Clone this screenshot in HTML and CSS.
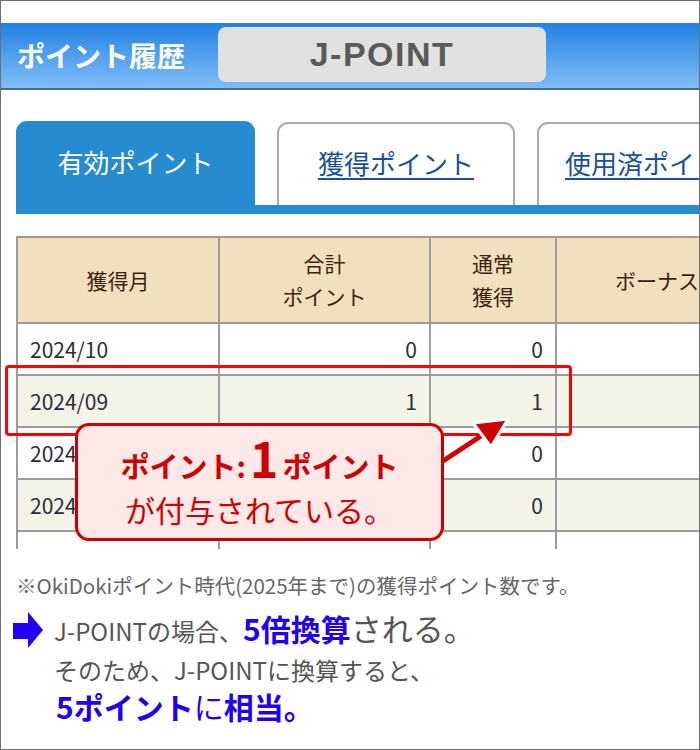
FILE: index.html
```html
<!DOCTYPE html>
<html lang="ja">
<head>
    <meta charset="UTF-8">
    <meta name="viewport" content="width=device-width, initial-scale=1.0">
    <title>ポイント履歴</title>
    <link rel="stylesheet" href="styles.css">
</head>
<body>
    <div class="frame">
        <header class="topbar">
            <h1 class="title">ポイント履歴</h1>
            <div class="brand-btn">J-POINT</div>
        </header>

        <nav class="tabs">
            <div class="tab active">有効ポイント</div>
            <div class="tab"><a href="#">獲得ポイント</a></div>
            <div class="tab"><a href="#">使用済ポイント</a></div>
        </nav>
        <div class="tab-bar"></div>

        <div class="table-wrap">
            <table class="history">
                <thead>
                    <tr>
                        <th class="col-month">獲得月</th>
                        <th class="col-total">合計<br>ポイント</th>
                        <th class="col-normal">通常<br>獲得</th>
                        <th class="col-bonus">ボーナス獲得</th>
                    </tr>
                </thead>
                <tbody>
                    <tr><td>2024/10</td><td class="num">0</td><td class="num">0</td><td></td></tr>
                    <tr class="alt"><td>2024/09</td><td class="num">1</td><td class="num">1</td><td></td></tr>
                    <tr><td>2024/08</td><td class="num">0</td><td class="num">0</td><td></td></tr>
                    <tr class="alt"><td>2024/07</td><td class="num">0</td><td class="num">0</td><td></td></tr>
                    <tr><td>2024/06</td><td class="num">0</td><td class="num">0</td><td></td></tr>
                </tbody>
            </table>
        </div>

        <p class="note">※OkiDokiポイント時代(2025年まで)の獲得ポイント数です。</p>

        <div class="summary">
            <svg class="summary-icon" width="32" height="37" viewBox="0 0 32 37">
                <polygon points="1,11 16,11 16,0 31,18 16,36 16,27 1,27" fill="#2400f0"/>
            </svg>
            <div class="summary-text">
                <div class="line-a">J-POINTの場合、<strong class="big">5倍換算</strong><span class="mid">される。</span></div>
                <div class="line-b">そのため、J-POINTに換算すると、</div>
                <div class="line-c"><strong>5ポイント</strong>に<strong>相当。</strong></div>
            </div>
        </div>

        <!-- overlays -->
        <div class="highlight"></div>
        <svg class="pointer" width="90" height="70" viewBox="0 0 90 70">
            <line x1="10" y1="58" x2="54" y2="29" stroke="#cc0000" stroke-width="5"/>
            <polygon points="78,14 43,18 61,42" fill="#cc0000" stroke="#fff" stroke-width="3" stroke-linejoin="round"/>
        </svg>
        <div class="callout">
            <div class="callout-line1">ポイント:<span class="one">1</span>ポイント</div>
            <div class="callout-line2">が付与されている。</div>
        </div>
    </div>
</body>
</html>
```

FILE: styles.css
```css
body {
    margin: 0;
    font-family: "Noto Sans CJK JP", "Noto Sans", sans-serif;
    background-color: #fff;
}

.frame {
    position: relative;
    width: 700px;
    height: 750px;
    box-sizing: border-box;
    border: 1px solid #6f6f6f;
    padding-top: 22px;
    overflow: hidden;
}

/* header */
.topbar {
    display: flex;
    height: 65px;
    background: linear-gradient(#2181e4, #81bef8);
    border-bottom: 2px solid #45698f;
}

.title {
    flex: 0 0 217px;
    margin: 0;
    padding-left: 16px;
    box-sizing: border-box;
    color: #fff;
    font-size: 28px;
    font-weight: bold;
    line-height: 65px;
}

.brand-btn {
    width: 328px;
    height: 55px;
    margin-top: 4px;
    background-color: #e1e1e1;
    border-radius: 8px;
    color: #5a5a5a;
    font-family: "Liberation Sans", Arial, sans-serif;
    font-size: 34px;
    font-weight: bold;
    letter-spacing: 1.5px;
    line-height: 55px;
    text-align: center;
}

/* tabs */
.tabs {
    display: flex;
    gap: 22px;
    align-items: flex-end;
    margin: 31px 0 0 15px;
    white-space: nowrap;
}

.tab {
    flex: 0 0 238px;
    height: 83px;
    box-sizing: border-box;
    border: 2px solid #aaa;
    border-bottom: none;
    border-radius: 11px 11px 0 0;
    background-color: #fff;
    font-size: 26px;
    line-height: 78px;
    text-align: center;
    overflow: hidden;
}

.tab a {
    color: #1a4f9e;
    text-decoration: underline;
    text-decoration-thickness: 2px;
    text-underline-offset: 4px;
}

.tab.active {
    flex-basis: 239px;
    height: 84px;
    border: none;
    background-color: #268bd0;
    color: #fff;
    line-height: 82px;
}

.tab-bar {
    height: 9px;
    margin-left: 15px;
    background-color: #268bd0;
}

/* table */
.table-wrap {
    height: 313px;
    margin: 22px 0 0 15px;
    overflow: hidden;
}

.history {
    table-layout: fixed;
    width: 791px;
    border-collapse: separate;
    border-spacing: 0;
    border-top: 2px solid #9c9c9c;
    border-left: 2px solid #9c9c9c;
    font-size: 21px;
    color: #2b2b3a;
}

.history th,
.history td {
    box-sizing: border-box;
    border-right: 2px solid #9c9c9c;
    border-bottom: 2px solid #9c9c9c;
    padding: 0 12px;
}

.history th {
    height: 86px;
    background-color: #f2dfbd;
    color: #3b1f10;
    font-weight: normal;
    line-height: 33px;
    text-align: center;
    white-space: nowrap;
    overflow: hidden;
}

.history td {
    height: 52px;
    background-color: #fff;
}

.history tr.alt td {
    background-color: #f4f3e8;
}

.history .num {
    text-align: right;
}

.col-month { width: 202px; }
.col-total { width: 211px; }
.col-normal { width: 126px; }
.col-bonus { width: 250px; }

.history th.col-bonus {
    text-align: left;
    padding-left: 58px;
}

/* notes */
.note {
    margin: 22px 0 0 15px;
    color: #666;
    font-size: 20.5px;
    line-height: 28px;
    white-space: nowrap;
}

.summary {
    display: flex;
    margin: 10px 0 0 11px;
    color: #555;
}

.summary-icon {
    flex: none;
    margin-top: 3px;
}

.summary-text {
    margin-left: 10px;
}

.line-a {
    font-size: 24px;
    line-height: 38px;
    white-space: nowrap;
}

.line-a .big {
    color: #2200ee;
    font-size: 30px;
}

.line-a .mid {
    font-size: 31px;
}

.line-b {
    font-size: 24px;
    line-height: 40px;
    white-space: nowrap;
}

.line-c {
    margin-left: 2px;
    color: #2200ee;
    font-size: 30px;
    line-height: 32px;
    white-space: nowrap;
}

/* overlays */
.highlight {
    position: absolute;
    left: 4px;
    top: 364px;
    width: 567px;
    height: 71px;
    box-sizing: border-box;
    border: 3px solid #ff0000;
    border-radius: 4px;
}

.pointer {
    position: absolute;
    left: 429px;
    top: 404px;
}

.callout {
    position: absolute;
    left: 74px;
    top: 422px;
    width: 369px;
    height: 118px;
    box-sizing: border-box;
    border: 3px solid #cc0000;
    border-radius: 14px;
    background-color: #ffe8e8;
    color: #cc0000;
    text-align: center;
    padding-top: 6px;
}

.callout-line1 {
    font-size: 29px;
    font-weight: bold;
    line-height: 50px;
}

.callout-line1 .one {
    font-size: 48px;
    margin: 0 4px;
}

.callout-line2 {
    margin-top: 2px;
    font-size: 30px;
    line-height: 34px;
}
```
